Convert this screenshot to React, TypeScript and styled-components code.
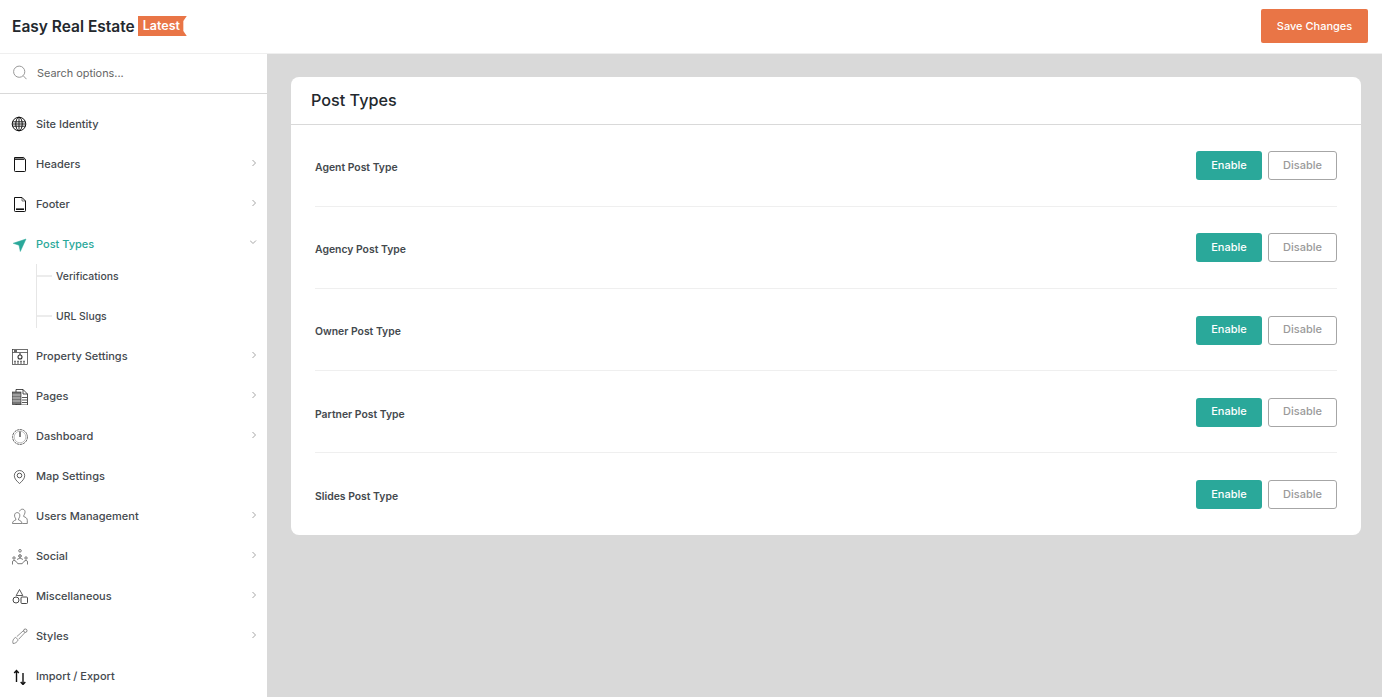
import styled, { createGlobalStyle } from "styled-components";
import { ReactNode } from "react";

const GlobalStyle = createGlobalStyle`
    * {
        box-sizing: border-box;
    }
    html,
    body {
        margin: 0;
        padding: 0;
        height: 100%;
        overflow: hidden;
        font-family: Inter, "Liberation Sans", sans-serif;
        background: #d9d9d9;
    }
`;

const Page = styled.div`
    width: 1382px;
    height: 697px;
    display: flex;
    flex-direction: column;
    overflow: hidden;
`;

const TopBar = styled.header`
    height: 54px;
    flex: none;
    background: #fff;
    border-bottom: 1px solid #efefef;
    display: flex;
    align-items: center;
    justify-content: space-between;
    padding: 0 14px 1px 12px;
`;

const Brand = styled.div`
    display: flex;
    align-items: center;
    gap: 3px;
`;

const BrandName = styled.span`
    font-size: 15.5px;
    font-weight: 600;
    color: #23282d;
`;

const Badge = styled.span`
    height: 20px;
    width: 49px;
    display: flex;
    align-items: center;
    padding: 0 0 1px 5px;
    background: #e97546;
    color: #fff;
    font-size: 12.5px;
    font-weight: 600;
    clip-path: polygon(0 0, 100% 0, 93% 25%, 93% 75%, 100% 100%, 0 100%);
`;

const SaveButton = styled.button`
    width: 107px;
    height: 34px;
    border: none;
    border-radius: 2px;
    background: #e97546;
    color: #fff;
    font-family: inherit;
    font-size: 11px;
    font-weight: 500;
`;

const Body = styled.div`
    flex: 1;
    display: flex;
    min-height: 0;
`;

const Sidebar = styled.aside`
    width: 267px;
    flex: none;
    background: #fff;
    overflow: hidden;
`;

const SearchBox = styled.div`
    height: 40px;
    display: flex;
    align-items: center;
    gap: 10px;
    padding: 0 0 2px 13px;
    border-bottom: 1px solid #d9d9d9;
    color: #666;
    font-size: 10.9px;
`;

const Nav = styled.nav`
    padding-top: 10px;
`;

const Row = styled.div<{ $active?: boolean }>`
    height: 40px;
    display: flex;
    align-items: center;
    padding: 0 10px 0 11px;
    color: ${(p) => (p.$active ? "#2aa89a" : "#44494e")};
    font-size: 11px;
    font-weight: 500;
`;

const IconSlot = styled.span`
    width: 25px;
    height: 18px;
    flex: none;
    display: flex;
    align-items: center;
`;

const RowLabel = styled.span`
    flex: 1;
`;

const ChevronIcon = styled.svg`
    margin: -2px -1px 0 0;
`;

const SubList = styled.div`
    position: relative;
    margin-top: -8px;

    &::before {
        content: "";
        position: absolute;
        left: 36px;
        top: 8px;
        bottom: 8px;
        width: 1px;
        background: #e6e6e6;
    }
`;

const SubRow = styled.div`
    height: 40px;
    display: flex;
    align-items: center;
    gap: 4px;
    padding-left: 37px;
    color: #44494e;
    font-size: 10.4px;
    font-weight: 500;

    &::before {
        content: "";
        width: 15px;
        height: 2px;
        background: #ececec;
    }
`;

const Main = styled.main`
    flex: 1;
    padding: 23px 21px 0 24px;
`;

const Card = styled.section`
    background: #fff;
    border-radius: 8px;
    height: 458px;
`;

const CardHeader = styled.div`
    height: 48px;
    display: flex;
    align-items: center;
    padding: 0 0 2px 20px;
    border-bottom: 1px solid #d9d9d9;
`;

const CardTitle = styled.h2`
    margin: 0;
    font-size: 16.2px;
    font-weight: 500;
    color: #23282d;
`;

const Options = styled.div`
    margin-top: -0.4px;
    padding: 0 24px;
`;

const Option = styled.div`
    height: 82.2px;
    display: flex;
    align-items: center;
    justify-content: space-between;
    border-bottom: 1px solid #efefef;

    &:last-child {
        border-bottom: none;
    }
`;

const OptionLabel = styled.span`
    padding-top: 4.7px;
    font-size: 10.4px;
    font-weight: 600;
    color: #44494e;
`;

const Buttons = styled.div`
    display: flex;
    gap: 6px;
    margin-top: 0.9px;
`;

const ToggleButton = styled.button<{ $on?: boolean }>`
    width: ${(p) => (p.$on ? "66px" : "69px")};
    height: 29px;
    padding: 0 0 2px;
    border-radius: 3px;
    border: ${(p) => (p.$on ? "none" : "1px solid #a6a6a6")};
    background: ${(p) => (p.$on ? "#2aa89a" : "#fff")};
    color: ${(p) => (p.$on ? "#fff" : "#9a9a9a")};
    font-family: inherit;
    font-size: 11px;
    font-weight: 500;
`;

const Svg = ({ children }: { children: ReactNode }) => (
    <svg
        width="18"
        height="18"
        viewBox="0 0 18 18"
        fill="none"
        stroke="#222"
        strokeWidth="1"
    >
        {children}
    </svg>
);

const Chevron = ({ open }: { open?: boolean }) => (
    <ChevronIcon width="8" height="8" viewBox="0 0 8 8" fill="none" stroke="#a5a5a5" strokeWidth="1">
        {open ? <path d="M0 1.5 L3 4.5 L6 1.5" /> : <path d="M2.5 1 L5.5 4 L2.5 7" />}
    </ChevronIcon>
);

const icons: Record<string, ReactNode> = {
    globe: (
        <Svg>
            <circle cx="8" cy="9" r="6.8" stroke="#111" />
            <ellipse cx="8" cy="9" rx="3.2" ry="6.8" stroke="#111" />
            <path d="M8 2.2v13.6M1.6 6.8h12.8M1.2 9h13.6M1.6 11.2h12.8" stroke="#111" strokeWidth="0.9" />
        </Svg>
    ),
    header: (
        <Svg>
            <path d="M3.5 2.5h9.2l1.8 1.8v11.4a.8.8 0 0 1-.8.8H4.3a.8.8 0 0 1-.8-.8z" stroke="#111" />
            <path d="M4 4.2h9.5" strokeWidth="1.6" stroke="#333" />
        </Svg>
    ),
    footer: (
        <Svg>
            <path d="M3.5 2.5h7.5l3.5 3.5v9.7a.8.8 0 0 1-.8.8H4.3a.8.8 0 0 1-.8-.8z" stroke="#111" />
            <path d="M5 14.2h8" strokeWidth="1.6" stroke="#111" />
            <path d="M11 2.5V6h3.5" strokeWidth="0.6" />
        </Svg>
    ),
    post: (
        <Svg>
            <path d="M2.2 8.3 L15 4 L9.3 16.5 L8 10.2z" fill="#2aa89a" stroke="#2aa89a" strokeWidth="0.5" strokeLinejoin="round" />
        </Svg>
    ),
    property: (
        <Svg>
            <rect x="1.5" y="2.5" width="15" height="15" strokeWidth="0.7" stroke="#333" />
            <path d="M1.5 5.5h15" strokeWidth="0.7" stroke="#333" />
            <path d="M3 4h3" strokeWidth="1.4" stroke="#222" />
            <circle cx="9" cy="10" r="2" strokeWidth="1.1" stroke="#333" />
            <path d="M9 6v2" strokeWidth="1" />
            <path d="M3 14.3h12M3 16h12" strokeWidth="1" strokeDasharray="2 1" stroke="#555" />
        </Svg>
    ),
    pages: (
        <Svg>
            <path d="M5 2.5h7l4.5 4.5v11H5z" strokeWidth="0.8" stroke="#222" />
            <path d="M12 2.5V7h4.5" strokeWidth="0.8" stroke="#222" />
            <rect x="1.5" y="5" width="8.5" height="12.5" fill="#777" stroke="#222" strokeWidth="0.6" />
            <path d="M1.5 8h8M1.5 11h8M1.5 14h8" stroke="#ddd" strokeWidth="0.8" />
            <path d="M11 10.5h5M11 13h5M11 15.5h5" stroke="#444" strokeWidth="0.9" />
        </Svg>
    ),
    dashboard: (
        <Svg>
            <circle cx="9" cy="10" r="7.4" strokeWidth="0.8" strokeDasharray="2.6 0.5" stroke="#444" />
            <circle cx="9" cy="10" r="5.8" strokeWidth="0.5" stroke="#888" />
            <path d="M9 4.5v5.5" strokeWidth="1.2" stroke="#333" />
        </Svg>
    ),
    map: (
        <Svg>
            <path d="M8.5 16.5c-2.6-2.2-5.2-4.8-5.2-7.8a5.2 5.2 0 0 1 10.4 0c0 3-2.6 5.6-5.2 7.8z" strokeWidth="0.8" stroke="#444" />
            <circle cx="8.5" cy="8.5" r="2.3" strokeWidth="0.9" stroke="#444" />
        </Svg>
    ),
    users: (
        <Svg>
            <path d="M1.5 16.5c0-2.3 1.6-2.8 3.4-3.6.2-.8-.2-1.2-.7-2.1-.6-1-.8-2-.6-3 .3-1.5 1.3-2.2 2.6-2.2s2.3.7 2.6 2.2c.2 1-.1 2-.6 3-.5.9-.9 1.3-.7 2.1 1.8.8 3.4 1.3 3.4 3.6z" strokeWidth="0.7" stroke="#555" />
            <path d="M8.6 4.4c.5-1.5 1.5-2.2 2.8-2.2s2.3.7 2.6 2.2c.2 1-.1 2-.6 3-.5.9-.9 1.3-.7 2.1 1.8.8 3.6 1.4 3.6 3.9v3.1h-5" strokeWidth="0.7" stroke="#555" />
        </Svg>
    ),
    social: (
        <Svg>
            <circle cx="9" cy="3.8" r="1.3" strokeWidth="0.7" stroke="#444" />
            <circle cx="9" cy="9" r="1.3" strokeWidth="0.8" stroke="#333" />
            <circle cx="3" cy="11" r="1.2" strokeWidth="0.7" stroke="#444" />
            <circle cx="15" cy="11" r="1.2" strokeWidth="0.7" stroke="#444" />
            <path d="M1.5 17.5v-3.2l1.5-1 2 1 1.8 2.4h4.4l1.8-2.4 2-1 1.5 1v3.2M6 12.5l3-1.5 3 1.5" strokeWidth="0.7" stroke="#444" />
        </Svg>
    ),
    misc: (
        <Svg>
            <path d="M8.5 2.5l3.3 6H5.2z" strokeWidth="0.8" stroke="#333" />
            <circle cx="5" cy="13" r="3" strokeWidth="0.9" stroke="#333" />
            <rect x="10" y="10" width="6.5" height="6.5" rx="1" strokeWidth="0.9" stroke="#333" />
        </Svg>
    ),
    styles: (
        <Svg>
            <path d="M2 16.5c-.8-2.5.4-5 2.6-6.2l2.6 2.6c-1.2 2.4-3 3.6-5.2 3.6z" strokeWidth="0.7" stroke="#666" />
            <path d="M5.8 9.6L12.5 3.6M7.9 12L14 5.5" strokeWidth="0.7" stroke="#666" />
            <circle cx="14.3" cy="3.7" r="1.7" strokeWidth="0.8" stroke="#666" />
        </Svg>
    ),
    transfer: (
        <Svg>
            <path d="M5.5 15V3.5M3.2 6L5.5 3.5 7.8 6M12 6v11.5M9.7 15l2.3 2.5 2.3-2.5" strokeWidth="1.4" stroke="#111" />
        </Svg>
    ),
};

interface INavItem {
    label: string;
    icon: string;
    arrow?: boolean;
    active?: boolean;
    children?: string[];
}

const navItems: INavItem[] = [
    { label: "Site Identity", icon: "globe" },
    { label: "Headers", icon: "header", arrow: true },
    { label: "Footer", icon: "footer", arrow: true },
    {
        label: "Post Types",
        icon: "post",
        arrow: true,
        active: true,
        children: ["Verifications", "URL Slugs"],
    },
    { label: "Property Settings", icon: "property", arrow: true },
    { label: "Pages", icon: "pages", arrow: true },
    { label: "Dashboard", icon: "dashboard", arrow: true },
    { label: "Map Settings", icon: "map" },
    { label: "Users Management", icon: "users", arrow: true },
    { label: "Social", icon: "social", arrow: true },
    { label: "Miscellaneous", icon: "misc", arrow: true },
    { label: "Styles", icon: "styles", arrow: true },
    { label: "Import / Export", icon: "transfer" },
];

const options = [
    "Agent Post Type",
    "Agency Post Type",
    "Owner Post Type",
    "Partner Post Type",
    "Slides Post Type",
];

function App() {
    return (
        <Page>
            <GlobalStyle />
            <TopBar>
                <Brand>
                    <BrandName>Easy Real Estate</BrandName>
                    <Badge>Latest</Badge>
                </Brand>
                <SaveButton>Save Changes</SaveButton>
            </TopBar>
            <Body>
                <Sidebar>
                    <SearchBox>
                        <svg width="14" height="15" viewBox="0 0 14 15" fill="none" stroke="#999" strokeWidth="1">
                            <circle cx="6.2" cy="6.7" r="5.6" />
                            <path d="M10.3 10.8 L13.5 14.2" />
                        </svg>
                        <span>Search options...</span>
                    </SearchBox>
                    <Nav>
                        {navItems.map((item) => (
                            <div key={item.label}>
                                <Row $active={item.active}>
                                    <IconSlot>{icons[item.icon]}</IconSlot>
                                    <RowLabel>{item.label}</RowLabel>
                                    {item.arrow && <Chevron open={item.active} />}
                                </Row>
                                {item.children && (
                                    <SubList>
                                        {item.children.map((child) => (
                                            <SubRow key={child}>{child}</SubRow>
                                        ))}
                                    </SubList>
                                )}
                            </div>
                        ))}
                    </Nav>
                </Sidebar>
                <Main>
                    <Card>
                        <CardHeader>
                            <CardTitle>Post Types</CardTitle>
                        </CardHeader>
                        <Options>
                            {options.map((label) => (
                                <Option key={label}>
                                    <OptionLabel>{label}</OptionLabel>
                                    <Buttons>
                                        <ToggleButton $on>Enable</ToggleButton>
                                        <ToggleButton>Disable</ToggleButton>
                                    </Buttons>
                                </Option>
                            ))}
                        </Options>
                    </Card>
                </Main>
            </Body>
        </Page>
    );
}

export default App;
